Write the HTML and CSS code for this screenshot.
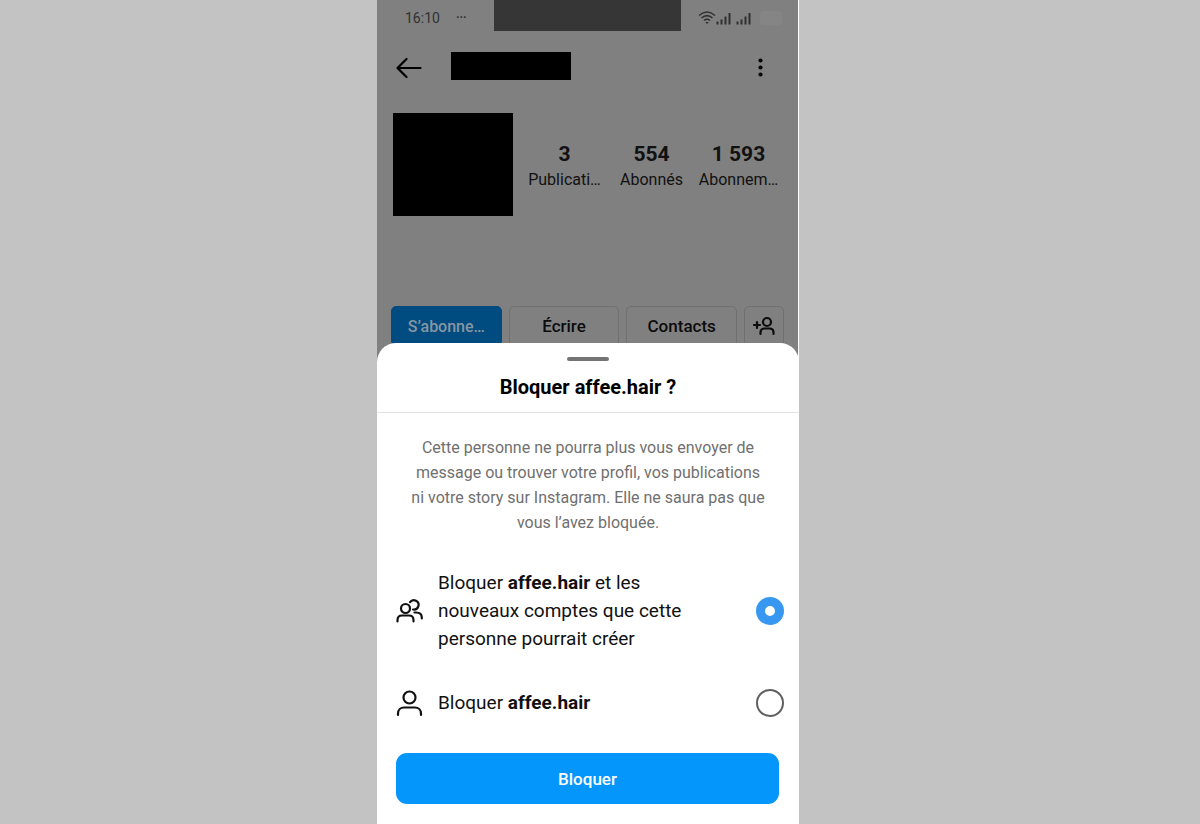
FILE: index.html
```html
<!DOCTYPE html>
<html lang="fr">
<head>
<meta charset="utf-8">
<meta name="viewport" content="width=device-width, initial-scale=1">
<title>Bloquer affee.hair</title>
<link rel="stylesheet" href="styles.css">
</head>
<body>
<main class="phone">
  <section class="profile">
    <div class="status">
      <div class="status-left"><span>16:10</span><span class="status-more">···</span></div>
      <div class="notch"></div>
      <div class="status-right">
        <svg width="54" height="16" viewBox="0 0 54 16" fill="none" stroke="#303030" stroke-width="1.5" aria-hidden="true">
          <path d="M1 5.500Q9-1.500 17 5.500M3.500 8Q9 3.200 14.500 8M6 10.500Q9 8 12 10.500"/>
          <path d="M7.300 12h3.400L9 14z" fill="#303030" stroke="none"/>
          <path d="M19.500 14.500v-3M23.500 14.500v-5M27.500 14.500v-8M31.500 14.500V3M39.500 14.500v-3M43.500 14.500v-5M47.500 14.500v-8M51.500 14.500V3" stroke-width="2"/>
        </svg>
        <span class="battery"></span>
      </div>
    </div>
    <header class="topbar">
      <button class="icon-button" type="button" aria-label="Retour">
        <svg width="28" height="24" viewBox="0 0 28 24" fill="none" stroke="#000" stroke-width="2.200" stroke-linecap="round" stroke-linejoin="round"><path d="M25.500 14H3M11.500 5L2.500 14l9 9"/></svg>
      </button>
      <div class="name-mask"></div>
      <button class="icon-button" type="button" aria-label="Options">
        <svg width="6" height="22" viewBox="0 0 6 22" fill="#000"><circle cx="2.500" cy="5.500" r="2.100"/><circle cx="2.500" cy="12.500" r="2.100"/><circle cx="2.500" cy="19.500" r="2.100"/></svg>
      </button>
    </header>
    <div class="summary">
      <div class="avatar-mask"></div>
      <div class="stats">
        <div class="stat"><strong>3</strong><span>Publicati…</span></div>
        <div class="stat"><strong>554</strong><span>Abonnés</span></div>
        <div class="stat"><strong>1 593</strong><span>Abonnem…</span></div>
      </div>
    </div>
    <div class="actions">
      <button class="action follow" type="button">S’abonne…</button>
      <button class="action" type="button">Écrire</button>
      <button class="action" type="button">Contacts</button>
      <button class="action add" type="button" aria-label="Suggestions">
        <svg width="24" height="20" viewBox="0 0 24 20" fill="none" stroke="#0c0c0c" stroke-width="2.200" stroke-linecap="round"><path d="M2 9h6M5 6v6M8.500 18v-1.500c0-2.500 1.500-4 4-4h5c2.500 0 4 1.500 4 4V18"/><circle cx="15" cy="6" r="4"/></svg>
      </button>
    </div>
  </section>

  <form class="sheet">
    <div class="handle"></div>
    <h1 class="title">Bloquer affee.hair ?</h1>
    <p class="info">Cette personne ne pourra plus vous envoyer de message ou trouver votre profil, vos publications ni votre story sur Instagram. Elle ne saura pas que vous l’avez bloquée.</p>
    <div class="option">
      <svg class="option-icon" width="28" height="28" viewBox="0 0 28 28" fill="none" stroke="#111" stroke-width="2.200" stroke-linecap="round" aria-hidden="true">
        <circle cx="9.500" cy="11.500" r="4.500"/>
        <path d="M1.500 24.500V23c0-3 1.800-4.500 4.500-4.500h7c2.700 0 4.500 1.500 4.500 4.500v1.500"/>
        <path d="M14 5.200A4.700 4.700 0 1 1 17 12.500M18.500 15.500h1.500c3.800 0 5.800 1.500 5.800 5v1"/>
      </svg>
      <label for="all">Bloquer <b>affee.hair</b> et les nouveaux comptes que cette personne pourrait créer</label>
      <input class="radio" type="radio" name="scope" id="all" checked>
    </div>
    <div class="option">
      <svg class="option-icon" width="28" height="28" viewBox="0 0 28 28" fill="none" stroke="#111" stroke-width="2.200" stroke-linecap="round" aria-hidden="true">
        <circle cx="13.500" cy="8.500" r="6"/>
        <path d="M2 26v-1.500c0-3.500 2.500-6 6-6h11c3.500 0 6 2.500 6 6V26"/>
      </svg>
      <label for="one">Bloquer <b>affee.hair</b></label>
      <input class="radio" type="radio" name="scope" id="one">
    </div>
    <button class="submit" type="button">Bloquer</button>
  </form>
</main>
</body>
</html>
```
FILE: styles.css
```css
* { box-sizing: border-box; }

body {
  margin: 0;
  padding-right: 24px;
  background: #c3c3c3;
  color: #111;
  font-family: Roboto, "Liberation Sans", sans-serif;
}

button { font: inherit; cursor: pointer; }

.phone {
  display: flex;
  flex-direction: column;
  max-width: 422px;
  min-height: 100vh;
  margin: 0 auto;
  background: #fff;
}

.profile {
  margin-right: 1px;
  padding-bottom: 16px;
  background: #808080;
}

.status {
  display: grid;
  grid-template-columns: 117px 1fr 117px;
  height: 31px;
  color: #303030;
  font-size: 14px;
}

.status-left {
  display: flex;
  align-items: center;
  gap: 16px;
  padding: 4px 0 0 28px;
}

.status-more { font-size: 12px; font-weight: 700; }
.notch { background: #363636; }

.status-right {
  display: flex;
  align-items: center;
  gap: 8px;
  padding: 4px 0 0 17px;
}

.battery {
  width: 22px;
  height: 14px;
  border-radius: 4px;
  background: #858585;
}

.topbar {
  display: flex;
  align-items: center;
  padding: 21px 34px 0 18px;
}

.icon-button {
  display: flex;
  padding: 0;
  border: 0;
  background: none;
}

.name-mask {
  width: 120px;
  height: 28px;
  margin: 0 auto 0 28px;
  background: #000;
}

.summary {
  display: flex;
  align-items: center;
  gap: 8px;
  padding: 33px 16px 0;
}

.avatar-mask {
  flex: none;
  width: 120px;
  height: 103px;
  background: #000;
}

.stats {
  display: grid;
  grid-template-columns: repeat(3, 1fr);
  flex: 1;
  padding-top: 5px;
}

.stat {
  display: flex;
  flex-direction: column;
  align-items: center;
  font-size: 16px;
  line-height: 25px;
}

.stat strong { font-size: 21px; }

.actions {
  display: flex;
  gap: 7px;
  padding: 90px 14px 0;
}

.action {
  flex: 1;
  height: 40px;
  padding: 0;
  border: 1px solid #707070;
  border-radius: 5px;
  background: none;
  color: #0c0c0c;
  font-size: 17px;
  font-weight: 500;
}

.follow {
  border-color: #004b80;
  background: #004b80;
  color: #8796a2;
  font-size: 16px;
}

.add {
  display: flex;
  flex: 0 0 40px;
  align-items: center;
  justify-content: center;
}

.sheet {
  display: flex;
  flex: 1;
  flex-direction: column;
  margin-top: -19px;
  padding-bottom: 19px;
  border-radius: 19px 19px 0 0;
  background: #fff;
}

.handle {
  width: 42px;
  height: 4px;
  margin: 14px auto 0;
  border-radius: 2px;
  background: #747474;
}

.title {
  margin: 0;
  padding: 14px 0 12px;
  border-bottom: 1px solid #e4e4e4;
  color: #000;
  font-size: 20px;
  font-weight: 700;
  line-height: 25px;
  text-align: center;
}

.info {
  margin: 0;
  padding: 22px 32px 34px;
  color: #707070;
  font-size: 16px;
  line-height: 25px;
  text-align: center;
}

.option {
  display: flex;
  align-items: center;
  gap: 14px;
  margin-bottom: 36px;
  padding: 0 15px 0 19px;
  font-size: 19px;
  line-height: 28px;
}

.option label {
  flex: 1;
  padding-right: 48px;
}

.option-icon { flex: none; }

.radio {
  flex: none;
  width: 28px;
  height: 28px;
  margin: 0;
  border: 2px solid #606060;
  border-radius: 50%;
  appearance: none;
  background: #fff;
}

.radio:checked { border: 9px solid #3897f0; }

.submit {
  height: 51px;
  margin: 0 20px 0 19px;
  border: 0;
  border-radius: 11px;
  background: #0496fb;
  color: #fff;
  font-size: 17px;
  font-weight: 500;
}
```
